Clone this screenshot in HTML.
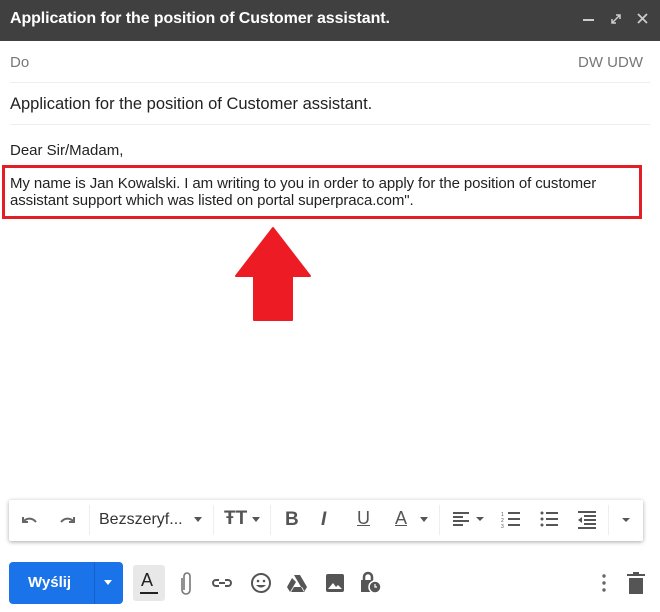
<!DOCTYPE html>
<html><head><meta charset="utf-8"><style>
*{margin:0;padding:0;box-sizing:border-box}
body{width:660px;height:612px;background:#fff;font-family:"Liberation Sans",Arial,sans-serif;position:relative;overflow:hidden}
.a{position:absolute}
.hdr{left:0;top:0;width:660px;height:41px;background:#404040}
.t{color:#fff;font-weight:bold;font-size:16px;left:10px;top:10px;letter-spacing:-0.1px}
.g{color:#777;font-size:15px}
.line{height:1px;background:#eee;left:10px;width:640px}
</style></head><body>
<div class="a hdr"></div>
<div class="a t">Application for the position of Customer assistant.</div>
<div class="a" style="left:583px;top:19px;width:11px;height:2px;background:#ccc"></div>
<svg class="a" style="left:608px;top:11px" width="16" height="16" viewBox="0 0 16 16"><path d="M4 12l8-8M8 4h4v4M4 8v4h4" stroke="#ccc" stroke-width="1.5" fill="none"/></svg>
<svg class="a" style="left:636px;top:12px" width="13" height="13" viewBox="0 0 13 13"><path d="M2 2l9 9M11 2l-9 9" stroke="#ccc" stroke-width="1.8"/></svg>
<div class="a g" style="left:10px;top:54px">Do</div>
<div class="a g" style="left:578px;top:54px">DW UDW</div>
<div class="a line" style="top:82px"></div>
<div class="a" style="left:10px;top:95px;font-size:16.5px;color:#222">Application for the position of Customer assistant.</div>
<div class="a line" style="top:124px"></div>
<div class="a" style="left:10px;top:142px;font-size:15px;color:#222">Dear Sir/Madam,</div>
<div class="a" style="left:2px;top:165px;width:640px;height:54px;border:3px solid #e41e26"></div>
<div class="a" style="left:10px;top:175px;font-size:15px;line-height:17px;color:#222;width:615px;letter-spacing:-0.1px">My name is Jan Kowalski. I am writing to you in order to apply for the position of customer assistant support which was listed on portal superpraca.com".</div>
<svg class="a" style="left:234px;top:226px" width="80" height="96" viewBox="0 0 80 96"><path d="M39 2L76 50H58V94H20V50H2Z" fill="#ed1c24" stroke="#ed1c24" stroke-width="2" stroke-linejoin="round"/></svg>
<div class="a" style="left:9px;top:500px;width:634px;height:41px;background:#fff;box-shadow:0 1px 4px rgba(0,0,0,.35);border-radius:2px"></div>
<svg class="a" style="left:20px;top:512px" width="60" height="18" viewBox="0 0 60 18"><path d="M3 5v5h5M3 10c3-4 9-5 13 0" stroke="#666" stroke-width="2" fill="none"/><path d="M54 5v5h-5M54 10c-3-4-9-5-13 0" stroke="#666" stroke-width="2" fill="none"/></svg>
<div class="a" style="left:89px;top:505px;width:1px;height:30px;background:#eee"></div>
<div class="a" style="left:99px;top:511px;font-size:16px;color:#333">Bezszeryf...</div>
<div class="a" style="left:194px;top:517px;border:4px solid transparent;border-top:5px solid #555"></div>
<div class="a" style="left:213px;top:505px;width:1px;height:30px;background:#eee"></div>
<div class="a" style="left:224px;top:508px;font-size:19px;font-weight:bold;color:#555">ŦT</div>
<div class="a" style="left:252px;top:517px;border:4px solid transparent;border-top:5px solid #555"></div>
<div class="a" style="left:270px;top:505px;width:1px;height:30px;background:#eee"></div>
<div class="a" style="left:285px;top:509px;font-size:19px;font-weight:bold;color:#555">B</div>
<div class="a" style="left:321px;top:509px;font-size:19px;font-weight:bold;font-style:italic;color:#555">I</div>
<div class="a" style="left:357px;top:508px;font-size:18px;color:#555;text-decoration:underline">U</div>
<div class="a" style="left:395px;top:508px;font-size:18px;color:#555;text-decoration:underline">A</div>
<div class="a" style="left:420px;top:517px;border:4px solid transparent;border-top:5px solid #555"></div>
<div class="a" style="left:439px;top:505px;width:1px;height:30px;background:#eee"></div>
<svg class="a" style="left:452px;top:510px" width="180" height="20" viewBox="0 0 180 20"><path d="M1 3h16M1 7h10M1 11h16M1 15h10" stroke="#555" stroke-width="2"/><path d="M24 7l4 4 4-4z" fill="#555"/><path d="M56 3h12M56 9h12M56 15h12" stroke="#555" stroke-width="2"/><text x="49" y="6" font-size="5" fill="#555">1</text><text x="49" y="12" font-size="5" fill="#555">2</text><text x="49" y="18" font-size="5" fill="#555">3</text><circle cx="90" cy="3" r="1.5" fill="#555"/><circle cx="90" cy="9" r="1.5" fill="#555"/><circle cx="90" cy="15" r="1.5" fill="#555"/><path d="M94 3h12M94 9h12M94 15h12" stroke="#555" stroke-width="2"/><path d="M126 2h18M132 6h12M132 10h12M132 14h12M126 18h18" stroke="#555" stroke-width="2"/><path d="M130 7v6l-4-3z" fill="#555"/><path d="M170 8l4 4 4-4z" fill="#555"/></svg>
<div class="a" style="left:608px;top:505px;width:1px;height:30px;background:#eee"></div>
<div class="a" style="left:9px;top:562px;width:114px;height:42px;background:#1a73e8;border-radius:4px"></div>
<div class="a" style="left:94px;top:562px;width:1px;height:42px;background:#1460c8"></div>
<div class="a" style="left:28px;top:574px;color:#fff;font-weight:bold;font-size:15px">Wyślij</div>
<div class="a" style="left:104px;top:580px;border:4px solid transparent;border-top:5px solid #fff"></div>
<div class="a" style="left:133px;top:565px;width:32px;height:36px;background:#e8e8e8;border-radius:3px"></div>
<div class="a" style="left:141px;top:570px;font-size:18px;color:#222">A</div>
<div class="a" style="left:140px;top:592px;width:18px;height:2px;background:#222"></div>
<svg class="a" style="left:178px;top:570px" width="220" height="26" viewBox="0 0 220 26"><path d="M6 20V6a3 3 0 0 1 6 0v14a4 4 0 0 1-8 0V8" stroke="#777" stroke-width="1.6" fill="none"/><path d="M41 10h-3a3 3 0 0 0 0 6h3M47 10h3a3 3 0 0 1 0 6h-3M41 13h6" stroke="#555" stroke-width="2" fill="none"/><circle cx="83" cy="13" r="9" stroke="#555" stroke-width="2" fill="none"/><circle cx="80" cy="11" r="1.3" fill="#555"/><circle cx="86" cy="11" r="1.3" fill="#555"/><path d="M78 15q5 5 10 0z" fill="#555"/><path d="M116 5h6l7 12-3 5zM114 8l-5 9 3 5 6-10zM113 22h14l-3-5h-8z" fill="#555"/><rect x="148" y="4" width="18" height="18" rx="2" fill="#555"/><path d="M150 19l5-6 3 4 2-2 4 4z" fill="#fff"/><path d="M186 10V7a4 4 0 0 1 8 0v3" stroke="#555" stroke-width="2.5" fill="none"/><rect x="183" y="10" width="12" height="12" fill="#555"/><circle cx="197" cy="17" r="6" fill="#555" stroke="#fff" stroke-width="1.5"/><path d="M197 14v3h2" stroke="#fff" stroke-width="1.2" fill="none"/></svg>
<svg class="a" style="left:598px;top:572px" width="52" height="24" viewBox="0 0 52 24"><circle cx="6" cy="4" r="1.7" fill="#666"/><circle cx="6" cy="11" r="1.7" fill="#666"/><circle cx="6" cy="18" r="1.7" fill="#666"/><path d="M31 6h14v16H31z" fill="#555"/><path d="M29 3h18M35 1h6" stroke="#555" stroke-width="2"/></svg>
</body></html>
